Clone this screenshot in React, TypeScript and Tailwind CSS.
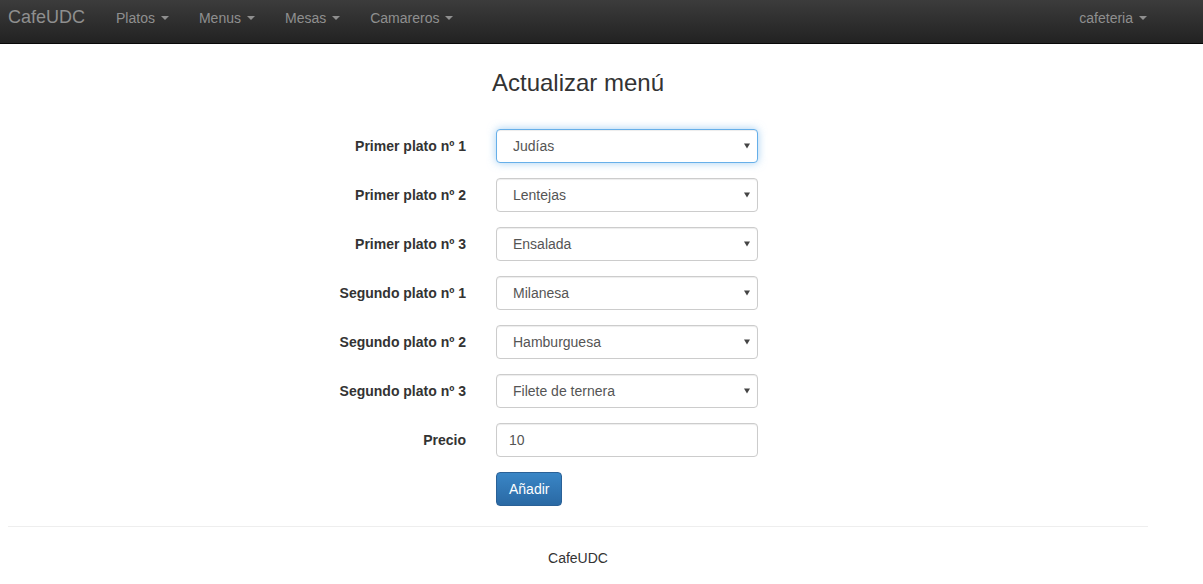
import { useState } from 'react';

const navLinks = ['Platos', 'Menus', 'Mesas', 'Camareros'];

const campos = [
  { label: 'Primer plato nº 1', value: 'Judías' },
  { label: 'Primer plato nº 2', value: 'Lentejas' },
  { label: 'Primer plato nº 3', value: 'Ensalada' },
  { label: 'Segundo plato nº 1', value: 'Milanesa' },
  { label: 'Segundo plato nº 2', value: 'Hamburguesa' },
  { label: 'Segundo plato nº 3', value: 'Filete de ternera' },
];

function Caret() {
  return (
    <span className="ml-[6px] inline-block h-0 w-0 border-x-[4px] border-t-[4px] border-x-transparent border-t-[#8f8f8f] align-middle" />
  );
}

function Field({ label, value, focused }: { label: string; value: string; focused?: boolean }) {
  const [val, setVal] = useState(value);
  return (
    <>
      <label className="pt-[7px] text-right text-[14px] font-bold leading-[20px] text-[#333]">{label}</label>
      <div className="relative mb-[15px]">
        <select
          value={val}
          onChange={(e) => setVal(e.target.value)}
          className={
            'h-[34px] w-full appearance-none rounded-[4px] border bg-white pl-[16px] pr-[24px] text-[14px] text-[#555] outline-none ' +
            (focused
              ? 'border-[#66afe9] shadow-[inset_0_1px_1px_rgba(0,0,0,0.075),0_0_8px_rgba(102,175,233,0.6)]'
              : 'border-[#ccc] shadow-[inset_0_1px_1px_rgba(0,0,0,0.075)]')
          }
        >
          <option>{value}</option>
        </select>
        <svg className="pointer-events-none absolute right-[8px] top-[14px]" width="6" height="6" viewBox="0 0 6 6">
          <path d="M0 0.5h6L3 5.5z" fill="#444" />
        </svg>
      </div>
    </>
  );
}

export default function App() {
  const [precio, setPrecio] = useState('10');

  return (
    <div className="min-h-[584px] bg-white font-['Liberation_Sans',Arial,sans-serif] text-[14px] text-[#333]">
      {/* Navbar */}
      <header className="h-[44px] bg-gradient-to-b from-[#3c3c3c] to-[#222] border-b border-[#080808]">
        <div className="flex w-[1156px] px-[8px]">
          <a className="pt-[7px] text-[18px] leading-[20px] text-[#8f8f8f]">CafeUDC</a>
          <nav className="ml-[16px] flex">
            {navLinks.map((l) => (
              <a key={l} className="flex items-center px-[15px] pt-[8px] leading-[20px] text-[#8f8f8f]">
                {l}
                <Caret />
              </a>
            ))}
          </nav>
          <div className="ml-auto flex">
            <a className="flex items-center pr-[1px] pt-[8px] leading-[20px] text-[#8f8f8f]">
              cafeteria
              <Caret />
            </a>
          </div>
        </div>
      </header>

      {/* Contenido */}
      <main className="w-[1156px] px-[8px]">
        <h3 className="pt-[26px] text-center text-[24px] leading-[26px] text-[#333]">Actualizar menú</h3>

        <form className="mt-[33px] grid grid-cols-[458px_262px] gap-x-[30px]" onSubmit={(e) => e.preventDefault()}>
          {campos.map((c, i) => (
            <Field key={c.label} label={c.label} value={c.value} focused={i === 0} />
          ))}

          <label className="pt-[7px] text-right text-[14px] font-bold leading-[20px] text-[#333]">Precio</label>
          <div className="mb-[15px]">
            <input
              value={precio}
              onChange={(e) => setPrecio(e.target.value)}
              className="h-[34px] w-full rounded-[4px] border border-[#ccc] px-[12px] text-[14px] text-[#555] shadow-[inset_0_1px_1px_rgba(0,0,0,0.075)] outline-none"
            />
          </div>

          <div />
          <div>
            <button
              type="submit"
              className="h-[34px] rounded-[4px] border border-[#2a6197] bg-gradient-to-b from-[#3a86c6] to-[#2a69a4] px-[12px] text-[14px] leading-[20px] text-white"
            >
              Añadir
            </button>
          </div>
        </form>

        <hr className="mt-[20px] border-t border-[#eee]" />
        <footer className="pt-[21px] text-center leading-[20px] text-[#333]">CafeUDC</footer>
      </main>
    </div>
  );
}
